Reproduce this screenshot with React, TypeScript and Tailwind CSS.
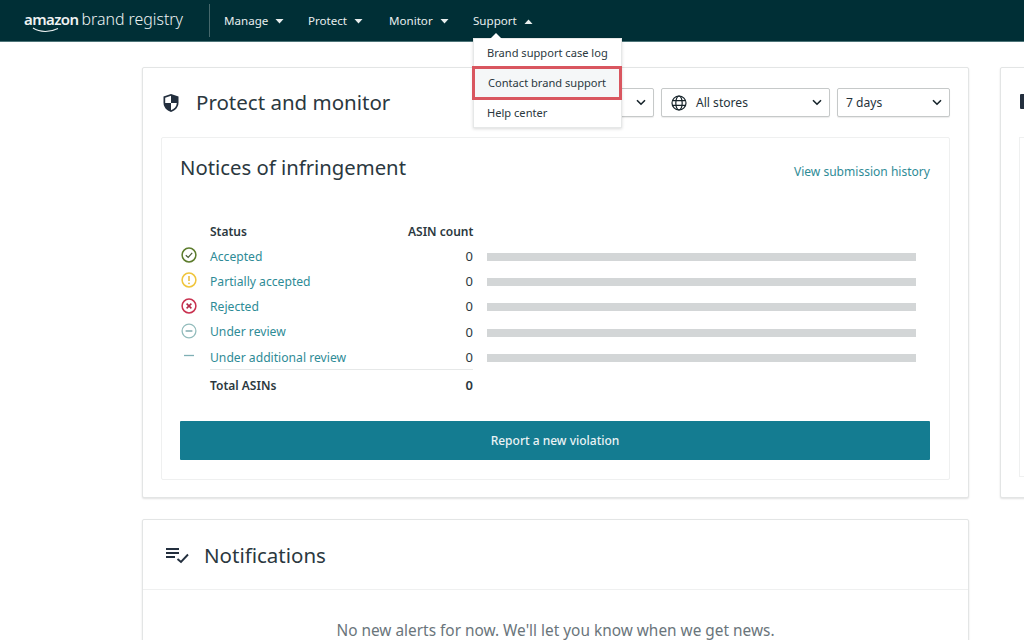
import React from "react";

const F = "font-['Noto_Sans','Open_Sans',sans-serif]";

function Caret({ up }: { up?: boolean }) {
  return (
    <svg width="9" height="5" viewBox="0 0 9 5" className="ml-[7px] mt-[1px]">
      <path d={up ? "M0.5 5 L4.5 0.5 L8.5 5 Z" : "M0.5 0 L4.5 4.5 L8.5 0 Z"} fill="#e8eeee" />
    </svg>
  );
}

function Chevron() {
  return (
    <svg width="10" height="7" viewBox="0 0 10 7" fill="none">
      <path d="M1 1.2 L5 5.2 L9 1.2" stroke="#16232a" strokeWidth="1.6" />
    </svg>
  );
}

function Select({ w, label, globe }: { w: string; label?: string; globe?: boolean }) {
  return (
    <div className={`${w} h-[29px] flex items-center justify-between pl-[8px] pr-[7px] border border-[#c6c9c9] rounded-[2px] bg-white shadow-[0_1px_1px_rgba(0,0,0,0.08)] shrink-0`}>
      <div className="flex items-center text-[12.1px] text-[#25323a] pt-[1px]">
        {globe && (
          <svg width="16" height="16" viewBox="0 0 16 16" fill="none" stroke="#16232a" strokeWidth="1.2" className="mr-[9px] ml-[1px]">
            <circle cx="8" cy="8" r="7" />
            <ellipse cx="8" cy="8" rx="3.2" ry="7" />
            <path d="M1.4 5.6 H14.6 M1.4 10.4 H14.6" />
          </svg>
        )}
        {label}
      </div>
      <Chevron />
    </div>
  );
}

function StatusIcon({ kind }: { kind: string }) {
  if (kind === "ok")
    return (
      <svg width="16" height="16" viewBox="0 0 16 16" fill="none">
        <circle cx="8" cy="8" r="6.9" stroke="#5c7c2c" strokeWidth="1.5" />
        <path d="M4.8 8.2 L7.2 10.5 L11.2 5.8" stroke="#4b5f38" strokeWidth="1.2" />
      </svg>
    );
  if (kind === "warn")
    return (
      <svg width="16" height="16" viewBox="0 0 16 16" fill="none">
        <circle cx="8" cy="8" r="6.9" stroke="#f0c53c" strokeWidth="1.5" />
        <path d="M8 4 V9" stroke="#e9b93a" strokeWidth="1.5" />
        <circle cx="8" cy="11.3" r="0.9" fill="#e9b93a" />
      </svg>
    );
  if (kind === "bad")
    return (
      <svg width="16" height="16" viewBox="0 0 16 16" fill="none">
        <circle cx="8" cy="8" r="6.9" stroke="#c9314f" strokeWidth="1.5" />
        <path d="M5.6 5.6 L10.4 10.4 M10.4 5.6 L5.6 10.4" stroke="#b32a48" strokeWidth="1.5" />
      </svg>
    );
  if (kind === "review")
    return (
      <svg width="16" height="16" viewBox="0 0 16 16" fill="none">
        <circle cx="8" cy="8" r="6.9" stroke="#93bcbc" strokeWidth="1.3" />
        <path d="M4.6 8 H11.4" stroke="#6f9ea3" strokeWidth="1.3" />
      </svg>
    );
  return (
    <svg width="16" height="16" viewBox="0 0 16 16" fill="none">
      <path d="M3 7.5 H13" stroke="#7fb0b5" strokeWidth="1.3" />
    </svg>
  );
}

const rows = [
  ["ok", "Accepted"],
  ["warn", "Partially accepted"],
  ["bad", "Rejected"],
  ["review", "Under review"],
  ["dash", "Under additional review"],
];

function Row({ kind, label }: { kind: string; label: string }) {
  return (
    <div className="h-[25.3px] flex items-center">
      <div className="w-[30px] h-[16px] -mt-[3px] pl-[1px] shrink-0">
        <StatusIcon kind={kind} />
      </div>
      <span className="text-[12.15px] text-[#2e8b96] w-[259px] shrink-0">{label}</span>
      <span className="text-[13px] text-[#2b3840] w-[14px] mr-[14px] text-right shrink-0 -ml-[10px]">0</span>
      <div className="h-[8px] w-[429px] bg-[#d3d6d7] shrink-0" />
    </div>
  );
}

export default function App() {
  return (
    <div className={`${F} w-[1024px] h-[640px] overflow-hidden bg-white relative`}>
      <header className="h-[42px] bg-[#002f36] border-b border-[#4d7478] flex items-center pl-[24px]">
        <div className="flex items-baseline text-[#eef3f3] leading-none -mt-[2px] relative w-[161px] whitespace-nowrap">
          <span className="text-[15px] font-semibold tracking-[-0.6px]">amazon</span>
          <span className="text-[15.9px] ml-[3px] font-light">brand registry</span>
          <svg width="28" height="6" viewBox="0 0 28 6" fill="none" className="absolute left-[8px] top-[15px]">
            <path d="M1 1 C8 5.5 18 5.5 26 1.5" stroke="#eef3f3" strokeWidth="1.1" />
          </svg>
        </div>
        <div className="w-px h-[33px] bg-[#46686c] ml-[24px] mr-[14px]" />
        <nav className="flex items-center text-[11.6px] text-[#e8eeee] pt-[1px]">
          <div className="flex items-center w-[84px]">Manage<Caret /></div>
          <div className="flex items-center w-[81px]">Protect<Caret /></div>
          <div className="flex items-center w-[84px]">Monitor<Caret /></div>
          <div className="flex items-center">Support<Caret up /></div>
        </nav>
      </header>

      <main className="flex items-start gap-[31px] pl-[142px] pt-[25px]">
        <div className="w-[827px] shrink-0 flex flex-col gap-[21px]">
          <section className="h-[431px] border border-[#e3e5e5] rounded-[2px] shadow-[0_1px_2px_rgba(0,0,0,0.12)] px-[18px] bg-white">
            <div className="h-[69px] flex items-center">
              <svg width="18" height="20" viewBox="0 0 18 20" className="ml-[1px] mr-[16px]">
                <path d="M9 1 L16.5 3.6 V9.5 C16.5 14 13.5 17.5 9 19 C4.5 17.5 1.5 14 1.5 9.5 V3.6 Z" fill="#232f3e" />
                <path d="M9 2.8 V10 H3.2 V4.8 Z M9 10 H14.8 C14.6 13.4 12.4 16 9 17.2 Z" fill="#fff" />
              </svg>
              <h2 className="text-[20.5px] text-[#2b3840] whitespace-nowrap">Protect and monitor</h2>
              <div className="flex-1" />
              <div className="flex gap-[7px]">
                <Select w="w-[169px]" />
                <Select w="w-[169px]" label="All stores" globe />
                <Select w="w-[113px]" label="7 days" />
              </div>
            </div>
            <div className="h-[343px] border border-[#eff0f0] rounded-[2px] pl-[18px] pr-[19px] pt-[14px]">
              <div className="flex items-center justify-between h-[30px]">
                <h3 className="text-[20.3px] text-[#2b3840]">Notices of infringement</h3>
                <a className="text-[12.05px] text-[#2e8b96] mt-[10px]">View submission history</a>
              </div>
              <div className="mt-[38px] w-[750px]">
                <div className="h-[24px] flex items-center text-[12px] font-semibold text-[#2b3840]">
                  <span className="ml-[30px] w-[198px]">Status</span>
                  <span className="w-[65px] text-right whitespace-nowrap">ASIN count</span>
                </div>
                {rows.map(([k, l]) => (
                  <Row key={l} kind={k} label={l} />
                ))}
                <div className="ml-[30px] w-[263px] h-[32px] border-t border-[#e6e8e8] flex items-center justify-between text-[12px] font-semibold text-[#2b3840] -mt-[1px]">
                  <span>Total ASINs</span>
                  <span className="text-[13px]">0</span>
                </div>
              </div>
              <button className="mt-[20px] w-full h-[39px] bg-[#147c91] rounded-[1px] text-[12px] font-medium text-[#eaf3f5]">
                Report a new violation
              </button>
            </div>
          </section>

          <section className="h-[200px] border border-[#e3e5e5] rounded-[2px] shadow-[0_1px_2px_rgba(0,0,0,0.12)] bg-white">
            <div className="h-[70px] flex items-center pl-[22px] border-b border-[#eff0f0]">
              <svg width="26" height="18" viewBox="0 0 26 18" fill="none" stroke="#232f3e" strokeWidth="2" className="mr-[13px] mt-[1px]">
                <path d="M1 3 H14 M1 7 H14 M1 11 H10" />
                <path d="M12.5 13 L16 16 L23 8.5" strokeWidth="1.9" />
              </svg>
              <h2 className="text-[20.5px] text-[#2b3840] mt-[2px]">Notifications</h2>
            </div>
            <p className="text-center text-[15.4px] text-[#6a757b] mt-[29px]">No new alerts for now. We'll let you know when we get news.</p>
          </section>
        </div>

        <section className="w-[200px] h-[431px] shrink-0 border border-[#e3e5e5] rounded-[2px] shadow-[0_1px_2px_rgba(0,0,0,0.12)] bg-white pl-[19px] pt-[26px]">
          <div className="w-[12px] h-[15px] bg-[#232f3e] rounded-[1px]" />
          <div className="mt-[28px] -ml-[1px] h-[340px] border border-[#eff0f0]" />
        </section>
      </main>

      <div className="absolute left-[473px] top-[38px] w-[149px] h-[90px] bg-white border border-[#e6e8e8] shadow-[0_1px_3px_rgba(0,0,0,0.15)] text-[11.1px] text-[#2b3840] flex flex-col">
        <div className="absolute left-[16px] -top-[6px] w-0 h-0 border-x-[6px] border-x-transparent border-b-[6px] border-b-white" />
        <div className="h-[27px] flex items-center pl-[13px] whitespace-nowrap pt-[1px]">Brand support case log</div>
        <div className="h-[34px] -ml-[2px] -mr-px flex items-center pl-[13px] border-[3px] border-[#d9565f] bg-[#f5f7f8] whitespace-nowrap">Contact brand support</div>
        <div className="h-[27px] flex items-center pl-[13px]">Help center</div>
      </div>
    </div>
  );
}
